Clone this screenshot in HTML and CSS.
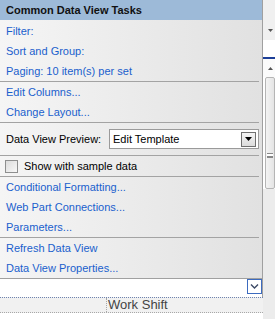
FILE: index.html
```html
<!DOCTYPE html>
<html lang="en">

<head>
    <meta charset="UTF-8" />
    <meta name="viewport" content="width=device-width, initial-scale=1.0" />
    <title>Common Data View Tasks</title>
    <link rel="stylesheet" href="styles.css">
</head>

<body>

    <div class="screen">
        <div class="main">
            <div class="panel">
                <div class="panel-head">Common Data View Tasks</div>

                <div class="group">
                    <a class="task" href="#">Filter:</a>
                    <a class="task" href="#">Sort and Group:</a>
                    <a class="task" href="#">Paging: 10 item(s) per set</a>
                </div>

                <div class="group">
                    <a class="task" href="#">Edit Columns...</a>
                    <a class="task" href="#">Change Layout...</a>
                </div>

                <div class="group preview-row">
                    <span class="preview-label">Data View Preview:</span>
                    <div class="select">
                        <span class="select-value">Edit Template</span>
                        <span class="select-btn">
                            <svg width="7" height="4" viewBox="0 0 7 4"><path d="M0 0h7L3.5 4z" fill="#000" /></svg>
                        </span>
                    </div>
                </div>

                <div class="group check-row">
                    <span class="checkbox"></span>
                    <span>Show with sample data</span>
                </div>

                <div class="group">
                    <a class="task" href="#">Conditional Formatting...</a>
                    <a class="task" href="#">Web Part Connections...</a>
                    <a class="task" href="#">Parameters...</a>
                </div>

                <div class="group last">
                    <a class="task" href="#">Refresh Data View</a>
                    <a class="task" href="#">Data View Properties...</a>
                </div>
            </div>

            <div class="under">
                <span class="chevron-btn">
                    <svg width="9" height="5" viewBox="0 0 9 5"><path d="M1 0.5l3.5 3.5l3.5-3.5" fill="none" stroke="#3c4a66" stroke-width="1.4" /></svg>
                </span>
            </div>

            <div class="grid-head">
                <span class="grid-cell first"></span>
                <span class="grid-cell">Work Shift</span>
            </div>
        </div>

        <div class="side">
            <div class="side-top">
                <svg width="5" height="3" viewBox="0 0 5 3"><path d="M0 0h5L2.5 3z" fill="#555" /></svg>
            </div>
            <div class="side-white"></div>
            <div class="side-line"></div>
            <div class="side-arrow">
                <svg width="5" height="3" viewBox="0 0 5 3"><path d="M0 3h5L2.5 0z" fill="#555" /></svg>
            </div>
            <div class="side-thumb">
                <span class="grip"></span>
            </div>
            <div class="side-track"></div>
        </div>
    </div>

</body>

</html>
```

FILE: styles.css
```css
body {
    margin: 0;
    font-family: 'Liberation Sans', Arial, sans-serif;
    font-size: 11px;
    color: #000;
    background: #fff;
}

.screen {
    display: flex;
    width: 275px;
    height: 319px;
    overflow: hidden;
}

.main {
    width: 263px;
    display: flex;
    flex-direction: column;
}

.panel {
    height: 278px;
    border-right: 1px solid #a0a0a0;
    border-bottom: 1px solid #a0a0a0;
    background: linear-gradient(to right, #f5f5f5, #e1e1e1);
}

.panel-head {
    height: 20px;
    line-height: 21px;
    padding-left: 6px;
    background: #9dbad8;
    font-weight: bold;
    color: #111;
}

.group {
    display: flex;
    flex-direction: column;
    margin-right: 3px;
    border-top: 1px solid #a3a3a3;
}

.panel-head + .group {
    border-top: 0;
    padding-top: 1px;
}

.task {
    height: 20px;
    line-height: 20px;
    padding-left: 6px;
    color: #1a5fcd;
    text-decoration: none;
}

.preview-row {
    flex-direction: row;
    align-items: center;
    height: 32px;
    padding-left: 6px;
}

.preview-label {
    width: 103px;
}

.select {
    flex: 1;
    display: flex;
    align-items: center;
    height: 18px;
    border: 1px solid #9a9a9a;
    background: #fff;
}

.select-value {
    flex: 1;
    padding-left: 3px;
}

.select-btn {
    width: 13px;
    height: 13px;
    margin-right: 2px;
    border: 1px solid #707070;
    background: linear-gradient(#f4f4f4, #dcdcdc);
    display: flex;
    align-items: center;
    justify-content: center;
}

.check-row {
    flex-direction: row;
    align-items: center;
    height: 20px;
    padding-left: 5px;
    gap: 6px;
}

.checkbox {
    width: 11px;
    height: 11px;
    border: 1px solid #8e8f8f;
    background: linear-gradient(135deg, #dcdcdc, #f8f8f8);
}

.under {
    height: 18px;
    border-right: 1px solid #a0a0a0;
    display: flex;
    justify-content: flex-end;
    align-items: flex-start;
}

.chevron-btn {
    width: 13px;
    height: 13px;
    border: 1px solid #3d6bbf;
    display: flex;
    align-items: center;
    justify-content: center;
}

.grid-head {
    display: flex;
    height: 14px;
    border-top: 1px dotted #6f84b0;
    border-bottom: 1px dotted #a8a8a8;
    background: #f1f1f1;
}

.grid-cell {
    line-height: 14px;
    color: #444;
}

.grid-cell.first {
    width: 106px;
    border-right: 1px dotted #a8a8a8;
}

.grid-cell + .grid-cell {
    padding-left: 1px;
    font-size: 13px;
}

.side {
    width: 12px;
    display: flex;
    flex-direction: column;
}

.side-top {
    height: 40px;
    background: #f0f0f0;
    display: flex;
    align-items: flex-end;
    justify-content: flex-end;
    padding: 0 2px 8px 0;
    box-sizing: border-box;
}

.side-white {
    height: 17px;
    background: #fff;
}

.side-line {
    height: 2px;
    background: #1c3f98;
}

.side-arrow {
    height: 18px;
    background: #fbfbfb;
    display: flex;
    align-items: center;
    justify-content: flex-end;
    padding-right: 2px;
}

.side-thumb {
    height: 110px;
    margin-left: 2px;
    border: 1px solid #b5b5b5;
    border-radius: 2px;
    background: linear-gradient(to right, #f4f4f4, #e4e4e4);
    display: flex;
    justify-content: center;
}

.grip {
    width: 6px;
    height: 5px;
    margin-top: 75px;
    border-top: 1px solid #888;
    border-bottom: 1px solid #888;
    box-sizing: border-box;
    background: linear-gradient(#fff 2px, #888 2px, #888 3px, #fff 3px);
}

.side-track {
    flex: 1;
    background: #ececec;
}
```
